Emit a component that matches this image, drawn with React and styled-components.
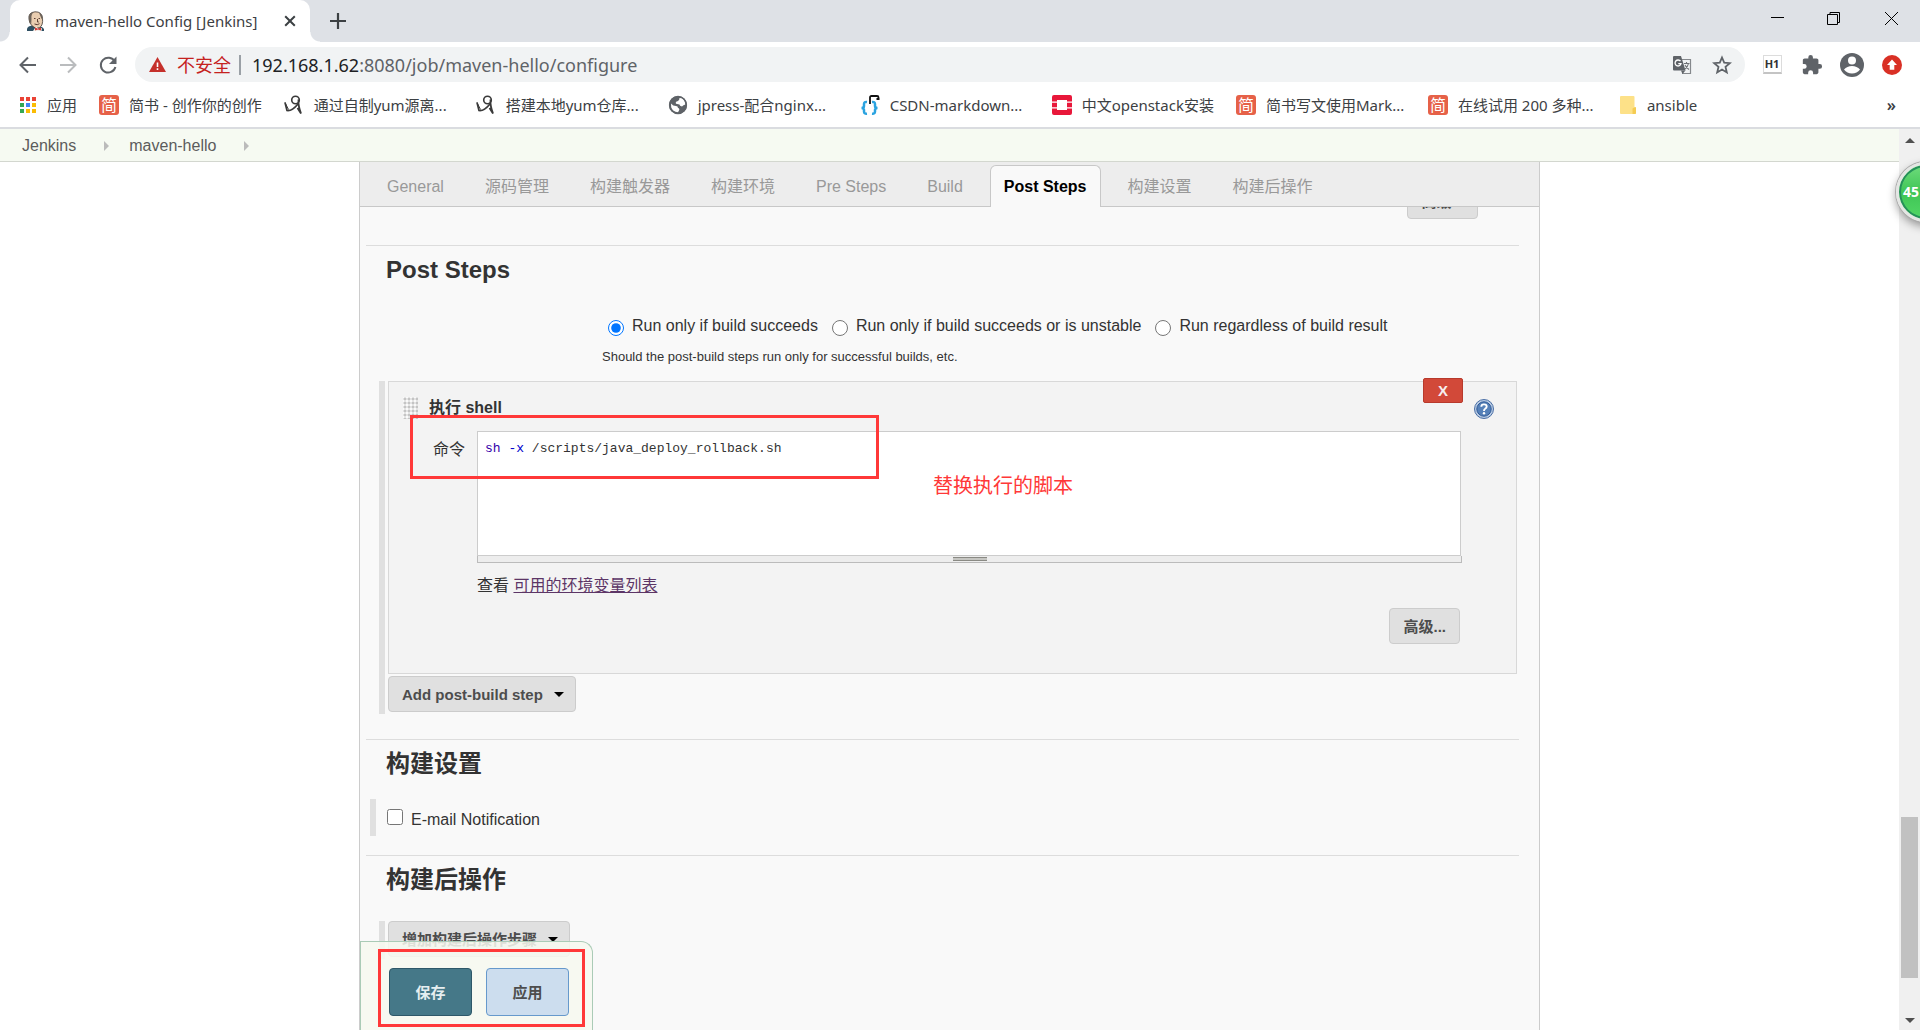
import React, { useState } from "react";
import styled, { createGlobalStyle } from "styled-components";

const GlobalStyle = createGlobalStyle`
  *, *::before, *::after {
    box-sizing: border-box;
  }
  body {
    margin: 0;
    overflow: hidden;
    background: #fff;
    color: #333;
    font: 16px/24px "Liberation Sans", "Noto Sans CJK SC", sans-serif;
  }
  button, input, textarea {
    margin: 0;
    font: inherit;
    color: inherit;
  }
`;

const Window = styled.div`
  display: flex;
  flex-direction: column;
  height: 100vh;
`;

/* ---------- browser ---------- */

const Chrome = styled.header`
  flex: none;
  font-family: "Noto Sans", "Noto Sans CJK SC", sans-serif;
  border-bottom: 2px solid #dadce0;
`;

const TabStrip = styled.div`
  display: flex;
  align-items: stretch;
  height: 42px;
  padding-left: 10px;
  background: #dee1e6;
`;

const BrowserTab = styled.div`
  position: relative;
  display: flex;
  align-items: center;
  gap: 10px;
  width: 300px;
  padding: 0 12px 0 16px;
  border-radius: 10px 10px 0 0;
  background: #fff;
  color: #3c4043;
  font-size: 15px;

  &::before, &::after {
    content: "";
    position: absolute;
    bottom: 0;
    width: 10px;
    height: 10px;
  }
  &::before {
    right: 100%;
    background: radial-gradient(circle at 0 0, transparent 9px, #fff 10px);
  }
  &::after {
    left: 100%;
    background: radial-gradient(circle at 100% 0, transparent 9px, #fff 10px);
  }
`;

const TabTitle = styled.span`
  flex: 1;
  white-space: nowrap;
`;

const IconButton = styled.button`
  display: flex;
  align-items: center;
  justify-content: center;
  width: ${(p) => p.$width || 40}px;
  height: ${(p) => p.$height || 35}px;
  padding: 0;
  border: 0;
  background: none;
  color: ${(p) => p.$color || "#5f6368"};
`;

const WindowButtons = styled.div`
  display: flex;
  margin-left: auto;
  padding-right: 1px;
`;

const Toolbar = styled.div`
  display: flex;
  align-items: center;
  height: 45px;
  padding: 0 8px;
`;

const AddressBar = styled.div`
  display: flex;
  align-items: center;
  flex: 1;
  height: 35px;
  margin: 0 0 0 7px;
  padding: 0 3px 0 14px;
  border-radius: 18px;
  background: #f1f3f4;
  font-size: 18px;
`;

const NotSafe = styled.span`
  margin-left: 11px;
  padding-right: 8px;
  border-right: 2px solid #9aa0a6;
  color: #c5221f;
  line-height: 20px;
`;

const Url = styled.span`
  flex: 1;
  margin-left: 11px;
  color: #5f6368;

  b {
    color: #202124;
    font-weight: 400;
  }
`;

const Extensions = styled.div`
  display: flex;
  align-items: center;
  margin-left: 7px;
`;

const HeadingBadge = styled.span`
  width: 19px;
  height: 19px;
  border: 1px solid #dcdcdc;
  border-bottom: 2px solid #c4c4c4;
  background: #fff;
  color: #333;
  font-size: 11px;
  font-weight: 700;
  line-height: 16px;
  text-align: center;
`;

const BookmarkBar = styled.nav`
  display: flex;
  align-items: center;
  gap: 22px;
  height: 40px;
  padding: 0 20px 4px;
  color: #3c4043;
  font-size: 15px;
`;

const Bookmark = styled.a`
  display: flex;
  align-items: center;
  flex: none;
  gap: 10px;
  width: ${(p) => (p.$wide ? "170px" : "auto")};
  color: inherit;
  text-decoration: none;
  white-space: nowrap;
`;

const More = styled.button`
  margin-left: auto;
  padding: 0 4px;
  border: 0;
  background: none;
  font-size: 16px;
  font-weight: 600;
`;

const JianIcon = styled.span`
  width: 20px;
  height: 20px;
  border-radius: 3px;
  background: #e66148;
  color: #fff;
  font-size: 16px;
  line-height: 20px;
  text-align: center;
`;

/* ---------- page ---------- */

const Viewport = styled.div`
  position: relative;
  display: flex;
  flex: 1;
  min-height: 0;
`;

const Page = styled.div`
  display: flex;
  flex-direction: column;
  flex: 1;
  min-width: 0;
`;

const Breadcrumbs = styled.nav`
  display: flex;
  align-items: center;
  flex: none;
  gap: 20px;
  height: 33px;
  padding: 1px 22px 0;
  border-bottom: 1px solid #d3d7cf;
  background: #f6faf2;

  a {
    color: #5c5c5c;
    text-decoration: none;
  }
`;

const Crumb = styled.span`
  display: flex;
  align-items: center;
  gap: 28px;

  &::after {
    content: "";
    border: 5px solid transparent;
    border-left-color: #bbb;
    border-right-width: 0;
  }
`;

const Panel = styled.main`
  position: relative;
  display: flex;
  flex-direction: column;
  flex: 1;
  min-height: 0;
  width: 100%;
  max-width: 1181px;
  margin: 0 auto;
  border: solid #ccc;
  border-width: 0 1px;
  background: #f9f9f9;
`;

const ConfigTabs = styled.div`
  display: flex;
  align-items: flex-end;
  flex: none;
  gap: 13px;
  height: 45px;
  padding: 0 13px;
  border-bottom: 1px solid #c8c8c8;
  background: #ededed;
`;

const ConfigTab = styled.button`
  height: 42px;
  margin-bottom: -1px;
  padding: 0 13px;
  border: 1px solid ${(p) => (p.$active ? "#c8c8c8" : "transparent")};
  border-bottom: 0;
  border-radius: 6px 6px 0 0;
  background: ${(p) => (p.$active ? "#f9f9f9" : "none")};
  color: ${(p) => (p.$active ? "#000" : "#999")};
  font-weight: ${(p) => (p.$active ? 700 : 400)};
  white-space: nowrap;
`;

const Content = styled.form`
  flex: 1;
  min-height: 0;
  padding: 0 20px 0 6px;
  overflow: hidden;
`;

const PreviousSection = styled.div`
  display: flex;
  align-items: flex-end;
  justify-content: flex-end;
  height: 38px;
  padding: 0 41px 26px 0;
`;

const Section = styled.section`
  border-top: 1px solid #ddd;
  padding-bottom: ${(p) => p.$bottom || 0}px;
`;

const SectionTitle = styled.h2`
  margin: 0 0 ${(p) => p.$gap}px 20px;
  padding-top: 8px;
  font-size: 24px;
  line-height: 32px;
`;

const RadioRow = styled.div`
  display: flex;
  gap: 14px;
  padding-left: 242px;
`;

const RadioLabel = styled.label`
  display: flex;
  gap: 8px;

  input {
    width: 16px;
    height: 16px;
    margin-top: 6px;
    accent-color: #0075ff;
  }
`;

const Hint = styled.p`
  margin: 9px 0 14px 236px;
  font-size: 13px;
  line-height: 20px;
`;

const Chunk = styled.div`
  margin: 0 2px 0 ${(p) => p.$indent}px;
  padding: 0 0 2px 3px;
  border-left: 6px solid #e0e0e0;
`;

const Button = styled.button`
  display: inline-flex;
  align-items: center;
  height: 36px;
  padding: 1px 13px 0;
  border: 1px solid #ccc;
  border-radius: 4px;
  background: #e0e0e0;
  color: #4d4d4d;
  font-size: 15px;
  font-weight: 700;
  white-space: nowrap;
`;

const Caret = styled.span`
  margin: 0 -2px 0 11px;
  border: 5px solid transparent;
  border-top-color: #000;
  border-bottom-width: 0;
`;

const Step = styled.div`
  position: relative;
  margin-bottom: 2px;
  border: 1px solid #d8d8d8;
  background: #f3f3f3;
`;

const StepHeader = styled.div`
  display: flex;
  align-items: center;
  height: 49px;
  padding: 2px 22px 0 14px;
  font-weight: 700;
`;

const DragHandle = styled.span`
  width: 15px;
  height: 22px;
  margin-right: 11px;
  background: radial-gradient(circle, #c4c4c4 1px, #fafafa 2px) 0 0 / 4px 4px;
`;

const DeleteButton = styled.button`
  position: absolute;
  top: -4px;
  right: 53px;
  width: 40px;
  height: 25px;
  padding: 0;
  border: 1px solid #b83a2c;
  border-radius: 2px;
  background: #d24939;
  color: #f6eeee;
  font-size: 15px;
  font-weight: 700;
  line-height: 23px;
`;

const HelpLink = styled.a`
  height: 20px;
  margin: 2px 0 0 auto;
`;

const StepBody = styled.div`
  display: grid;
  grid-template-columns: 44px 1fr;
  padding: 0 54px 29px 44px;
`;

const CommandLabel = styled.label`
  padding-top: 3px;
  line-height: 32px;
`;

// the textarea lies over the coloured copy of its own text
const Editor = styled.div`
  display: grid;
  height: 125px;
  margin-right: 1px;
  border: 1px solid #ccc;
  background: #fff;
  font: 13px/20px "Liberation Mono", "Noto Sans CJK SC", monospace;

  pre, textarea {
    grid-area: 1 / 1;
    margin: 0;
    padding: 7px;
    border: 0;
    font: inherit;
  }
  textarea {
    background: none;
    color: transparent;
    caret-color: #333;
    outline: 0;
    resize: none;
  }
`;

const Token = styled.span`
  color: ${(p) => p.$color};
`;

const Resizer = styled.div`
  display: flex;
  align-items: center;
  justify-content: center;
  height: 7px;
  border: 1px solid #bbb;
  border-top: 0;
  background: #ededed;

  &::after {
    content: "";
    width: 34px;
    height: 4px;
    border: solid #8a8a84;
    border-width: 1px 0;
    background: #c6c6c2;
  }
`;

const EnvHelp = styled.p`
  margin: 11px 0 10px;

  a {
    color: #5c3566;
  }
`;

const StepActions = styled.div`
  display: flex;
  justify-content: flex-end;
  padding-right: 2px;
`;

const CheckLabel = styled.label`
  display: flex;
  gap: 8px;
  padding: 9px 0 2px 8px;

  input {
    width: 16px;
    height: 16px;
    margin-top: 1px;
  }
`;

const SaveBar = styled.div`
  position: absolute;
  left: 0;
  bottom: 0;
  display: flex;
  gap: 14px;
  height: 89px;
  padding: 26px 23px 0 28px;
  border: 1px solid #aacbb6;
  border-bottom: 0;
  border-radius: 0 12px 0 0;
  background: rgba(247, 249, 240, 0.85);
`;

const SubmitButton = styled(Button)`
  justify-content: center;
  width: 83px;
  height: 48px;
  border-color: ${(p) => (p.$primary ? "#2e5869" : "#6699cc")};
  background: ${(p) => (p.$primary ? "#457888" : "#ccddee")};
  color: ${(p) => (p.$primary ? "#e6eef0" : "#4d4d4d")};
`;

/* ---------- marks over the page ---------- */

const RedFrame = styled.div`
  position: absolute;
  top: ${(p) => p.$top}px;
  left: ${(p) => p.$left}px;
  width: ${(p) => p.$width}px;
  height: ${(p) => p.$height}px;
  border: 3px solid #ff3838;
  pointer-events: none;
`;

const RedNote = styled.span`
  position: absolute;
  top: 89px;
  left: 544px;
  color: #ff3838;
  font-size: 20px;
  line-height: 30px;
`;

const Badge = styled.div`
  position: absolute;
  top: 33px;
  right: -36px;
  z-index: 1;
  width: 60px;
  height: 60px;
  padding-left: 4px;
  border: 3px solid #e4e6e4;
  border-radius: 50%;
  background: linear-gradient(#6fdc7c, #3fc556 50%, #52d765);
  box-shadow: inset 0 0 0 2px #25905a, 0 0 0 1px #aaa, 0 4px 10px rgba(0, 0, 0, 0.4);
  color: #fff;
  font: 700 14px/54px "Open Sans", sans-serif;
`;

const ScrollBar = styled.div`
  display: flex;
  flex-direction: column;
  align-items: center;
  width: 21px;
  padding: 9px 2px 7px;
  background: #f0f0f0;
`;

const ScrollArrow = styled.span`
  border: 5px solid transparent;
  border-${(p) => (p.$up ? "bottom" : "top")}-color: #505050;
  border-${(p) => (p.$up ? "top" : "bottom")}-width: 0;
`;

const ScrollTrack = styled.div`
  display: grid;
  grid-template-rows: 674fr 161fr 40fr;
  flex: 1;
  width: 100%;

  &::before {
    content: "";
    grid-row: 2;
    background: #c1c1c1;
  }
`;

/* ---------- icons ---------- */

const ButlerIcon = () => (
  <svg width="19" height="20" viewBox="0 0 19 20">
    <path d="M1 20v-2.500q1-2.500 5-3l7 .5q4 1 5 3V20z" fill="#2f5063" />
    <path d="M3 8Q2 1.500 9 .8q7-.3 7.500 6.500.8 7-3 9.500-4.500 1.500-7.500-2Q3 12 3 8z" fill="#e9cdb0" stroke="#3c3530" strokeWidth=".8" />
    <path d="M3 10Q1.500 2 8 1 4.800 3 5.500 8l-.3 5zM13 1.800q4.500 2 3.500 7l-1-1z" fill="#6b6259" />
    <path d="M8 7.500h1.500M12.500 7.500h1.500M11.500 8v3h1.300M8.500 13q3 1.500 5-.3" fill="none" stroke="#5c4035" />
    <path d="M7 20l3-4.500L13 18l3-1-.5 3z" fill="#f4f0ea" />
    <path d="M9 16.500l3 1.200 3-1.200v3l-3-1-3 1z" fill="#d33833" />
  </svg>
);

const Stroke = ({ size = 20, width = 2, d }) => (
  <svg width={size} height={size} viewBox="0 0 20 20" fill="none" stroke="currentColor" strokeWidth={width}>
    <path d={d} />
  </svg>
);

const ReloadIcon = () => (
  <svg width="20" height="20" viewBox="0 0 20 20">
    <path d="M16.700 6.500A7.400 7.400 0 1 0 17.400 12" fill="none" stroke="currentColor" strokeWidth="2" />
    <path d="M18.500 1.500v7.500H11z" fill="currentColor" />
  </svg>
);

const WarningIcon = () => (
  <svg width="17" height="15" viewBox="0 0 17 15">
    <path d="M8.500 0 17 15H0z" fill="#c5302b" />
    <path d="M7.700 5.500h1.600v4.500H7.700zM7.700 11.300h1.600v1.600H7.700z" fill="#fff" />
  </svg>
);

const TranslateIcon = () => (
  <svg width="20" height="20" viewBox="0 0 20 20">
    <path d="M8 4.500h10.500v14H10" fill="#f1f3f4" stroke="#85888c" strokeWidth="1.200" />
    <path d="M2 1h7l4.500 14.500H2q-1 0-1-1V2q0-1 1-1z" fill="#5f6368" />
    <path d="M9 15.500h4.500L10.500 19z" fill="#5f6368" />
    <path d="M8.500 6.200a3 3 0 1 0 .5 2.500H6.300" fill="none" stroke="#fff" strokeWidth="1.300" />
    <path d="M12 8.500h5.500M14.500 7v1.500M16.500 8.500q-.8 3.500-3.500 5.500M13 10q1.500 3 4 4.500" fill="none" stroke="#6f7276" strokeWidth="1.100" />
  </svg>
);

const StarIcon = () => (
  <svg width="20" height="20" viewBox="0 0 20 20">
    <path d="M10 2.500l2.200 5.200 5.600.5-4.300 3.700 1.300 5.500L10 14.500l-4.800 2.900 1.300-5.500L2.200 8.200l5.600-.5z" fill="none" stroke="currentColor" strokeWidth="1.800" />
  </svg>
);

const PuzzleIcon = () => (
  <svg width="22" height="22" viewBox="0 0 24 24" fill="currentColor">
    <path d="M20.500 11H19V7c0-1.100-.9-2-2-2h-4V3.500a2.500 2.500 0 0 0-5 0V5H4c-1.100 0-2 .9-2 2v3.800h1.500a2.700 2.700 0 0 1 0 5.400H2V20c0 1.100.9 2 2 2h3.800v-1.500a2.700 2.700 0 0 1 5.400 0V22H17c1.100 0 2-.9 2-2v-4h1.500a2.500 2.500 0 0 0 0-5z" />
  </svg>
);

const AvatarIcon = () => (
  <svg width="24" height="24" viewBox="0 0 24 24">
    <circle cx="12" cy="12" r="12" fill="currentColor" />
    <circle cx="12" cy="7.500" r="4" fill="#fff" />
    <path d="M4 16.500q3-3.500 8-3.500t8 3.500q-3 4-8 4t-8-4z" fill="#fff" />
  </svg>
);

const UpdateIcon = () => (
  <svg width="20" height="20" viewBox="0 0 20 20">
    <circle cx="10" cy="10" r="10" fill="#d93025" />
    <path d="M10 4.500l5 5.500h-2.700v4.800H7.700V10H5z" fill="#fff" />
  </svg>
);

const appColors = ["#ea4335", "#ea4335", "#ea4335", "#34a853", "#4285f4", "#fbbc04", "#34a853", "#fbbc04", "#fbbc04"];

const AppsIcon = () => (
  <svg width="17" height="18" viewBox="0 0 17 18">
    {appColors.map((color, i) => (
      <rect key={i} x={(i % 3) * 6} y={Math.floor(i / 3) * 6 + 1} width="4" height="4" fill={color} />
    ))}
  </svg>
);

const FigureIcon = () => (
  <svg width="20" height="20" viewBox="0 0 20 20" fill="none" stroke="#3a3a3a">
    <circle cx="11.500" cy="5" r="3.800" strokeWidth="1.600" />
    <path d="M1 7.500l2 8q5 .8 11-6.500" strokeWidth="1.700" />
    <path d="M14.500 4.500q-.5 6 2.500 14l-3.500-5.500" strokeWidth="1.800" />
    <path d="M1 7.500l3.500 7" strokeWidth="1" />
  </svg>
);

const GlobeIcon = () => (
  <svg width="20" height="20" viewBox="0 0 20 20">
    <circle cx="10" cy="10" r="9" fill="#5f6368" />
    <path d="M3 8.500q2 2.500 5 2.500 2 .2 2 2 2 .5 1 2.500l-1 1.700q-5.500-.3-6.800-5zM11.500 3l2.500.2q3 2 3.300 6.300-2 .3-3.300 2-2.500-.3-2.500-2L8 8.800q-1-2 1.500-2.500 2-.3 2-3.300z" fill="#fff" />
    <circle cx="10" cy="10" r="8.400" fill="none" stroke="#5f6368" strokeWidth="1.500" />
  </svg>
);

const BracesIcon = () => (
  <svg width="20" height="20" viewBox="0 0 20 20" fill="none">
    <path d="M7 7q-3-.5-3 2v2q0 2-2.500 2 2.500 0 2.500 2v1.500q0 2.500 3 2.200M12 7q3-.5 3 2v2q0 2 2.500 2-2.500 0-2.500 2v1.500q0 2.500-3 2.200" stroke="#2aa3e0" strokeWidth="2.500" />
    <path d="M10 9V2.500q0-1.500 1.500-1.500h5.500q1.500 0 1.500 1.500V4M16.500 4h3" stroke="#111" strokeWidth="1.800" />
  </svg>
);

const OpenstackIcon = () => (
  <svg width="20" height="20" viewBox="0 0 20 20">
    <path d="M2 0h16q2 0 2 2v4.500h-5V5H5v1.500H0V2q0-2 2-2zM0 7.700h5v4.600H0zM15 7.700h5v4.600h-5zM0 13.500h5V15h10v-1.500h5V18q0 2-2 2H2q-2 0-2-2z" fill="#e8173a" />
  </svg>
);

const FolderIcon = () => (
  <svg width="17" height="20" viewBox="0 0 17 20">
    <path d="M0 2q0-1 1-1h12.500q1 0 1 1v10.500h1.500V18q0 1-1 1H1q-1 0-1-1z" fill="#fde188" />
    <path d="M12.500 19v-5.500l2-1.200H16V18q0 1-1 1z" fill="#f5cc52" />
  </svg>
);

const HelpIcon = () => (
  <svg width="20" height="20" viewBox="0 0 20 20">
    <circle cx="10" cy="10" r="9.500" fill="#b9cbe3" stroke="#4a6fa5" />
    <circle cx="10" cy="10" r="7.200" fill="#5580b8" stroke="#2f5a98" />
    <path d="M7.300 7.800Q7.300 5.400 10 5.400t2.700 2.200q0 1.300-1.500 2.100-1.200.7-1.200 2.300" fill="none" stroke="#fff" strokeWidth="1.900" />
    <circle cx="10" cy="14.200" r="1.200" fill="#fff" />
  </svg>
);

const Jian = () => <JianIcon>简</JianIcon>;

/* ---------- data ---------- */

const bookmarks = [
  { icon: AppsIcon, text: "应用" },
  { icon: Jian, text: "简书 - 创作你的创作" },
  { icon: FigureIcon, text: "通过自制yum源离...", wide: true },
  { icon: FigureIcon, text: "搭建本地yum仓库...", wide: true },
  { icon: GlobeIcon, text: "jpress-配合nginx...", wide: true },
  { icon: BracesIcon, text: "CSDN-markdown...", wide: true },
  { icon: OpenstackIcon, text: "中文openstack安装" },
  { icon: Jian, text: "简书写文使用Mark...", wide: true },
  { icon: Jian, text: "在线试用 200 多种...", wide: true },
  { icon: FolderIcon, text: "ansible" },
];

const tabs = [
  "General",
  "源码管理",
  "构建触发器",
  "构建环境",
  "Pre Steps",
  "Build",
  "Post Steps",
  "构建设置",
  "构建后操作",
];

const runConditions = [
  "Run only if build succeeds",
  "Run only if build succeeds or is unstable",
  "Run regardless of build result",
];

const highlight = (code) =>
  code.split(/(\s+)/).map((word, i) => {
    if (word === "sh") return <Token key={i} $color="#3300aa">{word}</Token>;
    if (word.startsWith("-")) return <Token key={i} $color="#0000cc">{word}</Token>;
    return word;
  });

const BrowserChrome = () => (
  <Chrome>
    <TabStrip>
      <BrowserTab>
        <ButlerIcon />
        <TabTitle>maven-hello Config [Jenkins]</TabTitle>
        <IconButton $width={16} $height={16} $color="#3c4043" aria-label="Close tab">
          <Stroke size={16} width={2.5} d="M4 4l12 12M16 4L4 16" />
        </IconButton>
      </BrowserTab>
      <IconButton $width={55} $height={42} $color="#3c4043" aria-label="New tab">
        <Stroke width={2.2} d="M10 2v16M2 10h16" />
      </IconButton>
      <WindowButtons>
        <IconButton $width={57} $color="#000" aria-label="Minimize">
          <Stroke width={1} d="M4 9.500h13" />
        </IconButton>
        <IconButton $width={57} $color="#000" aria-label="Restore">
          <Stroke width={1} d="M3.500 6.500h10v10h-10zM6 6V4.500h9.500v10H14" />
        </IconButton>
        <IconButton $width={57} $color="#000" aria-label="Close">
          <Stroke width={1} d="M4 4l13 13M17 4L4 17" />
        </IconButton>
      </WindowButtons>
    </TabStrip>
    <Toolbar>
      <IconButton aria-label="Back">
        <Stroke d="M18 10H3M10 2.500L2.500 10l7.500 7.500" />
      </IconButton>
      <IconButton $color="#babcbe" aria-label="Forward">
        <Stroke d="M2 10h15M10 2.500l7.500 7.500-7.500 7.500" />
      </IconButton>
      <IconButton aria-label="Reload">
        <ReloadIcon />
      </IconButton>
      <AddressBar>
        <WarningIcon />
        <NotSafe>不安全</NotSafe>
        <Url>
          <b>192.168.1.62</b>:8080/job/maven-hello/configure
        </Url>
        <IconButton aria-label="Translate">
          <TranslateIcon />
        </IconButton>
        <IconButton aria-label="Bookmark">
          <StarIcon />
        </IconButton>
      </AddressBar>
      <Extensions>
        <IconButton aria-label="Headings">
          <HeadingBadge>H1</HeadingBadge>
        </IconButton>
        <IconButton aria-label="Extensions">
          <PuzzleIcon />
        </IconButton>
        <IconButton aria-label="Profile">
          <AvatarIcon />
        </IconButton>
        <IconButton aria-label="Update">
          <UpdateIcon />
        </IconButton>
      </Extensions>
    </Toolbar>
    <BookmarkBar>
      {bookmarks.map(({ icon: Icon, text, wide }) => (
        <Bookmark key={text} href="#" $wide={wide}>
          <Icon />
          {text}
        </Bookmark>
      ))}
      <More>»</More>
    </BookmarkBar>
  </Chrome>
);

const ShellStep = () => {
  const [command, setCommand] = useState("sh -x /scripts/java_deploy_rollback.sh");

  return (
    <Step>
      <StepHeader>
        <DragHandle />
        执行 shell
        <HelpLink href="#" aria-label="Help">
          <HelpIcon />
        </HelpLink>
      </StepHeader>
      <DeleteButton type="button">X</DeleteButton>
      <StepBody>
        <CommandLabel htmlFor="command">命令</CommandLabel>
        <div>
          <Editor>
            <pre aria-hidden="true">{highlight(command)}</pre>
            <textarea
              id="command"
              spellCheck={false}
              value={command}
              onChange={(e) => setCommand(e.target.value)}
            />
          </Editor>
          <Resizer />
          <EnvHelp>
            查看 <a href="#">可用的环境变量列表</a>
          </EnvHelp>
          <StepActions>
            <Button type="button">高级...</Button>
          </StepActions>
        </div>
      </StepBody>
      <RedFrame $top={33} $left={21} $width={469} $height={64} />
      <RedNote>替换执行的脚本</RedNote>
    </Step>
  );
};

const App = () => {
  const [condition, setCondition] = useState(runConditions[0]);

  return (
    <Window>
      <GlobalStyle />
      <BrowserChrome />
      <Viewport>
        <Page>
          <Breadcrumbs>
            <Crumb><a href="#">Jenkins</a></Crumb>
            <Crumb><a href="#">maven-hello</a></Crumb>
          </Breadcrumbs>
          <Panel>
            <ConfigTabs>
              {tabs.map((tab) => (
                <ConfigTab key={tab} $active={tab === "Post Steps"}>{tab}</ConfigTab>
              ))}
            </ConfigTabs>
            <Content>
              <PreviousSection>
                <Button type="button">高级...</Button>
              </PreviousSection>
              <Section $bottom={25}>
                <SectionTitle $gap={28}>Post Steps</SectionTitle>
                <RadioRow>
                  {runConditions.map((text) => (
                    <RadioLabel key={text}>
                      <input
                        type="radio"
                        name="condition"
                        checked={condition === text}
                        onChange={() => setCondition(text)}
                      />
                      {text}
                    </RadioLabel>
                  ))}
                </RadioRow>
                <Hint>Should the post-build steps run only for successful builds, etc.</Hint>
                <Chunk $indent={13}>
                  <ShellStep />
                  <Button type="button">
                    Add post-build step
                    <Caret />
                  </Button>
                </Chunk>
              </Section>
              <Section $bottom={19}>
                <SectionTitle $gap={19}>构建设置</SectionTitle>
                <Chunk $indent={4}>
                  <CheckLabel>
                    <input type="checkbox" />
                    E-mail Notification
                  </CheckLabel>
                </Chunk>
              </Section>
              <Section>
                <SectionTitle $gap={25}>构建后操作</SectionTitle>
                <Chunk $indent={13}>
                  <Button type="button">
                    增加构建后操作步骤
                    <Caret />
                  </Button>
                </Chunk>
              </Section>
            </Content>
            <SaveBar>
              <SubmitButton $primary>保存</SubmitButton>
              <SubmitButton>应用</SubmitButton>
              <RedFrame $top={7} $left={17} $width={207} $height={78} />
            </SaveBar>
          </Panel>
        </Page>
        <ScrollBar>
          <ScrollArrow $up />
          <ScrollTrack />
          <ScrollArrow />
        </ScrollBar>
        <Badge>45</Badge>
      </Viewport>
    </Window>
  );
};

export default App;
